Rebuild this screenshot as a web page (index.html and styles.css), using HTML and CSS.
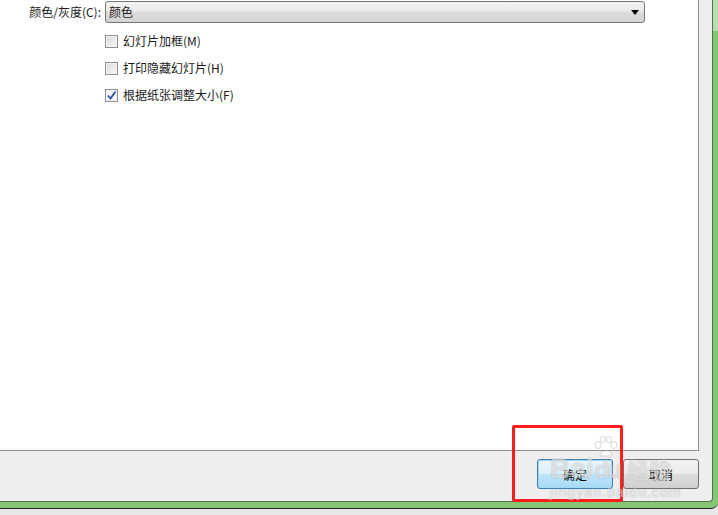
FILE: index.html
```html
<!DOCTYPE html>
<html lang="zh-CN">
<head>
<meta charset="utf-8">
<title>打印</title>
<link rel="stylesheet" href="styles.css">
</head>
<body>
<div class="frame">
  <div class="client">
    <div class="panel">
      <div class="combo-row">
        <label class="combo-label">颜色/灰度(C):</label>
        <div class="combo">
          <span class="combo-value">颜色</span>
          <svg class="combo-arrow" width="8" height="5" viewBox="0 0 8 5"><path d="M0 0 H8 L4 5 Z" fill="#000"/></svg>
        </div>
      </div>
      <div class="options">
        <div class="option"><span class="check"></span><span>幻灯片加框(M)</span></div>
        <div class="option"><span class="check"></span><span>打印隐藏幻灯片(H)</span></div>
        <div class="option"><span class="check checked"><svg width="11" height="11" viewBox="0 0 11 11"><path d="M2 5.5 L4.5 8.5 L9.5 1.5" fill="none" stroke="#2a4fa8" stroke-width="1.8"/></svg></span><span>根据纸张调整大小(F)</span></div>
      </div>
    </div>
    <div class="footer">
      <button class="btn btn-default">确定</button>
      <button class="btn">取消</button>
    </div>
  </div>
</div>
<div class="highlight"></div>
<div class="watermark">
  <svg class="paw" width="24" height="22" viewBox="0 0 24 22"><g fill="rgba(255,255,255,0.6)" stroke="rgba(150,150,150,0.35)" stroke-width="1"><ellipse cx="4" cy="9" rx="3" ry="3.6"/><ellipse cx="9" cy="3.5" rx="2.8" ry="3.2"/><ellipse cx="15" cy="3.5" rx="2.8" ry="3.2"/><ellipse cx="20" cy="9" rx="3" ry="3.6"/><path d="M6 20 C5 13 19 13 18 20 Z"/></g></svg>
  <div class="wm-logo"><span>Bai</span><span class="wm-du">du</span><span class="wm-cn">经验</span></div>
  <div class="wm-url">jingyan.baidu.com</div>
</div>
</body>
</html>
```
FILE: styles.css
```css
html, body {
  margin: 0;
  padding: 0;
}
body {
  width: 718px;
  height: 515px;
  overflow: hidden;
  background: #e7e7e7;
  font-family: "Noto Sans CJK SC", "Liberation Sans", sans-serif;
  font-size: 12px;
  color: #1a1a1a;
  position: relative;
}
.frame {
  width: 718px;
  height: 508px;
  border-bottom: 1px solid #1c2b1c;
  border-bottom-right-radius: 7px;
  background: linear-gradient(to bottom, #b9dfb1 0, #b9dfb1 31px, #84c676 31px, #84c676 100%);
}
.client {
  width: 712px;
  height: 501px;
  border-right: 1px solid #4d744a;
  border-bottom: 1px solid #4d744a;
  border-bottom-right-radius: 4px;
  background: #eeeeee;
  display: flex;
  flex-direction: column;
}
.panel {
  width: 698px;
  height: 450px;
  background: #fff;
  border-right: 1px solid #8f8f94;
  border-bottom: 1px solid #8f8f94;
  box-sizing: content-box;
}
.combo-row {
  display: flex;
  align-items: center;
  padding-top: 1px;
}
.combo-label {
  width: 105px;
  text-align: right;
  padding-right: 4px;
  box-sizing: border-box;
  line-height: 22px;
}
.combo {
  width: 540px;
  height: 22px;
  box-sizing: border-box;
  border: 1px solid #767676;
  border-radius: 3px;
  background: linear-gradient(to bottom, #f3f3f3 0%, #ebebeb 45%, #dddddd 50%, #d3d3d3 100%);
  display: flex;
  align-items: center;
  justify-content: space-between;
  padding: 0 5px 0 3px;
}
.combo-value {
  line-height: 20px;
}
.combo-arrow {
  display: block;
}
.options {
  margin-left: 105px;
  margin-top: 11px;
  display: flex;
  flex-direction: column;
  gap: 13px;
}
.option {
  display: flex;
  align-items: center;
  gap: 5px;
  height: 14px;
  line-height: 14px;
}
.check {
  width: 13px;
  height: 13px;
  box-sizing: border-box;
  border: 1px solid #8e8f8f;
  background: linear-gradient(135deg, #d8d8d8 0%, #f0f0f0 70%, #f8f8f8 100%);
  box-shadow: inset 0 0 0 1px #f4f4f4;
  display: flex;
  align-items: center;
  justify-content: center;
}
.check.checked {
  background: #f4f4f4;
}
.check svg {
  display: block;
}
.footer {
  flex: 1;
  display: flex;
  justify-content: flex-end;
  align-items: flex-start;
  gap: 10px;
  padding: 8px 13px 0 0;
}
.btn {
  width: 76px;
  height: 30px;
  box-sizing: border-box;
  border: 1px solid #707070;
  border-radius: 3px;
  background: linear-gradient(to bottom, #f2f2f2 0%, #ebebeb 48%, #dddddd 52%, #cfcfcf 100%);
  font-family: "Noto Sans CJK SC", "Liberation Sans", sans-serif;
  font-size: 12px;
  color: #000;
  padding: 0;
}
.btn-default {
  border-color: #3c7fb1;
  background: linear-gradient(to bottom, #eaf6fd 0%, #d9f0fc 48%, #bee6fd 52%, #a7d9f5 100%);
  box-shadow: inset 0 0 0 1px #9edbf7;
}
.highlight {
  position: absolute;
  left: 512px;
  top: 425px;
  width: 111px;
  height: 77px;
  box-sizing: border-box;
  border: 3px solid #ff1d1d;
  border-radius: 2px;
}
.watermark {
  position: absolute;
  left: 550px;
  top: 454px;
  pointer-events: none;
  color: rgba(255, 255, 255, 0.45);
  text-shadow: 1px 0 0 rgba(150, 150, 150, 0.18), -1px 0 0 rgba(150, 150, 150, 0.18), 0 1px 0 rgba(150, 150, 150, 0.18), 0 -1px 0 rgba(150, 150, 150, 0.18);
  font-family: "Liberation Sans", "Noto Sans CJK SC", sans-serif;
}
.paw {
  position: absolute;
  left: 44px;
  top: -18px;
}
.wm-logo {
  display: flex;
  align-items: baseline;
  font-size: 28px;
  font-weight: bold;
  line-height: 28px;
  height: 28px;
  white-space: nowrap;
}
.wm-du {
  font-size: 24px;
  letter-spacing: -2px;
  margin-left: 1px;
}
.wm-cn {
  font-family: "Noto Sans CJK SC", sans-serif;
  font-size: 22px;
  font-weight: bold;
  margin-left: 7px;
}
.wm-url {
  font-size: 14px;
  line-height: 16px;
  letter-spacing: 1.1px;
  margin-top: 2px;
  white-space: nowrap;
}
```
